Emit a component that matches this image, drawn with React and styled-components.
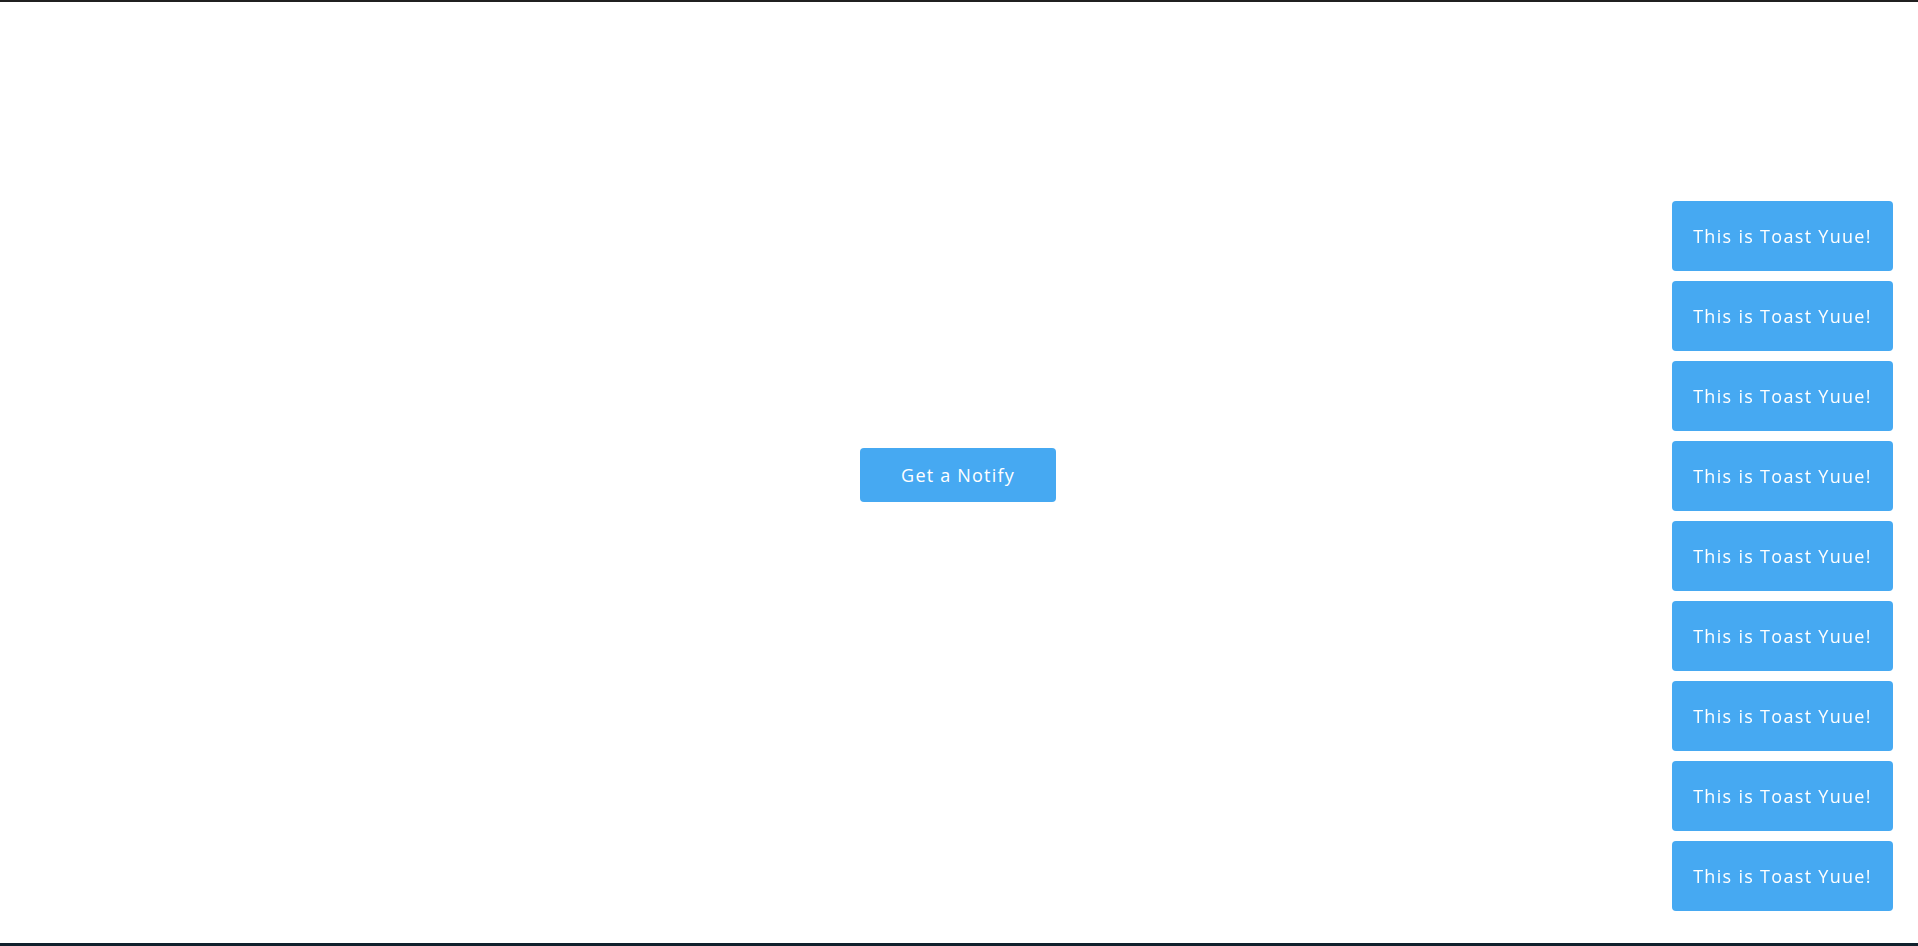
import React from "react";
import styled, { createGlobalStyle } from "styled-components";

const GlobalStyle = createGlobalStyle`
  * {
    box-sizing: border-box;
  }
  body {
    margin: 0;
    font-family: "Open Sans", "Noto Sans", sans-serif;
    background: #ffffff;
  }
`;

const toasts = Array.from({ length: 9 }, (_, i) => ({
  id: i,
  text: "This is Toast Yuue!",
}));

function App() {
  return (
    <>
      <GlobalStyle />
      <Page>
        <NotifyButton type="button">Get a Notify</NotifyButton>
      </Page>
      <ToastStack>
        {toasts.map((t) => (
          <Toast key={t.id}>{t.text}</Toast>
        ))}
      </ToastStack>
    </>
  );
}

export default App;

const Page = styled.div`
  height: 100vh;
  display: flex;
  align-items: center;
  justify-content: center;
  border-top: 2px solid #202020;
  border-bottom: 3px solid #10202c;
`;

const NotifyButton = styled.button`
  width: 196px;
  height: 54px;
  border: none;
  border-radius: 4px;
  background-color: #46a9f2;
  color: #ffffff;
  font-family: "Open Sans", "Noto Sans", sans-serif;
  font-size: 18px;
  letter-spacing: 1.2px;
  cursor: pointer;
  margin: 5px 2px 0 0;
`;

const ToastStack = styled.div`
  position: fixed;
  right: 25px;
  bottom: 35px;
  display: flex;
  flex-direction: column;
  gap: 10px;
`;

const Toast = styled.div`
  width: 221px;
  height: 70px;
  display: flex;
  align-items: center;
  justify-content: center;
  border-radius: 4px;
  background-color: #46a9f2;
  color: #ffffff;
  font-size: 18px;
  letter-spacing: 1.3px;
`;
